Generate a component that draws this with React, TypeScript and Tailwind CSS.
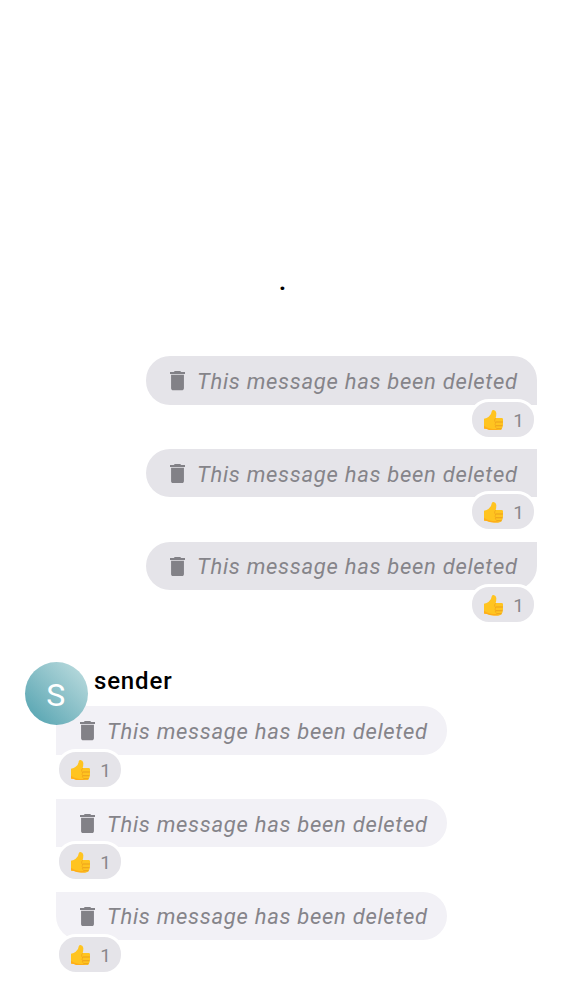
import React from "react";

const TrashIcon = () => (
  <svg className="mt-[15px] h-[19.3px] w-[15px] shrink-0" viewBox="5 3 14 18" preserveAspectRatio="none" fill="#828187">
    <path d="M6 19c0 1.1.9 2 2 2h8c1.1 0 2-.9 2-2V6.6H6V19zM19 4h-3.5l-1-1h-5l-1 1H5v1.9h14V4z" />
  </svg>
);

const ThumbsUp = () => (
  <svg className="h-[20.5px] w-[19.7px] shrink-0" viewBox="0 0 59 61" role="img" aria-label="👍">
    <path
      d="M0 26Q9 25 14 20Q23 13 23 4Q24 0 29 0Q36 1 37 9Q37 17 35 24H53Q59 25 58 31Q58 34 56 36Q59 39 58 43Q57 46 55 47Q57 51 54 54Q52 61 45 61H30Q16 61 9 57Q4 55 0 55Z"
      fill="#ffc420"
    />
    <path d="M0 47Q8 54 18 55Q25 57 36 57L45 61H30Q16 61 9 57Q4 55 0 55Z" fill="#ffad19" />
    <path d="M35 24Q31 28 32 34Q36 35 34 40Q32 43 35 46Q33 50 36 53" fill="none" stroke="#f2a51c" strokeWidth="2.5" />
    <path d="M36 36H56M36 47H55M38 56H52" fill="none" stroke="#eb9f1c" strokeWidth="3" strokeLinecap="round" />
  </svg>
);

type RowProps = { mine?: boolean; shape: string };

const Message = ({ mine, shape }: RowProps) => (
  <div className={`relative h-[92.67px] w-[391px] ${mine ? "ml-[146px]" : "ml-[56px]"}`}>
    <div className={`flex h-[48.33px] pl-[24px] ${shape} ${mine ? "bg-[#e5e4e9]" : "bg-[#f2f1f6]"}`}>
      <TrashIcon />
      <span className="mt-[-0.4px] ml-[12px] whitespace-nowrap text-[22px] italic leading-[52px] tracking-[0.71px] text-[#85848a]">
        This message has been deleted
      </span>
    </div>
    <div
      className={`absolute top-[42.33px] flex h-[41px] w-[68px] items-center rounded-[20px] border-[3px] border-white bg-[#e5e4e9] pl-[11.5px] ${
        mine ? "right-0" : "left-0"
      }`}
    >
      <span className="mt-[1.6px] flex"><ThumbsUp /></span>
      <span className="ml-[10px] mt-[3px] text-[19px] leading-[20px] text-[#88878c]">1</span>
    </div>
  </div>
);

export default function App() {
  return (
    <main className="h-[1000px] w-[562px] overflow-hidden bg-white font-['Roboto','Noto_Color_Emoji',sans-serif]">
      <div className="flex h-[356.33px] justify-center pt-[270px] pl-[3px] text-[24px] font-bold leading-[24px] text-black">.</div>
      <Message mine shape="rounded-[24px] rounded-br-none" />
      <Message mine shape="rounded-l-[24px]" />
      <Message mine shape="rounded-l-[24px] rounded-br-[24px]" />
      <div className="relative z-10 flex h-[72px] pl-[25px] pt-[28px]">
        <div className="flex h-[62.67px] w-[62.67px] shrink-0 items-center justify-center rounded-full bg-linear-to-bl from-[#c1dfe1] to-[#4ba0ae] pt-[3px] pr-[1px] text-[32px] text-white">
          S
        </div>
        <span className="ml-[6.3px] mt-[5px] text-[24px] font-medium leading-[28px] tracking-[0.85px] text-black">sender</span>
      </div>
      <Message shape="rounded-r-[24px]" />
      <Message shape="rounded-r-[24px]" />
      <Message shape="rounded-r-[24px] rounded-bl-[24px]" />
    </main>
  );
}
